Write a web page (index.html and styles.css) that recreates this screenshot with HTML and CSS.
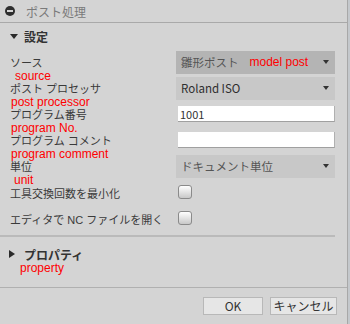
FILE: index.html
```html
<!DOCTYPE html>
<html lang="ja">
<head>
    <meta charset="UTF-8">
    <title>ポスト処理</title>
    <link rel="stylesheet" href="styles.css">
</head>
<body>
    <div class="panel">
        <div class="titlebar">
            <span class="close-icon"></span>
            <span class="title">ポスト処理</span>
        </div>

        <div class="section">
            <div class="section-head"><span class="tri-down"></span>設定</div>

            <div class="row">
                <div class="label">ソース<span class="note note-source">source</span></div>
                <div class="select select-active">
                    <span class="value muted">雛形ポスト</span>
                    <span class="note-inline">model post</span>
                    <span class="arrow"></span>
                </div>
            </div>

            <div class="row">
                <div class="label">ポスト プロセッサ<span class="note">post processor</span></div>
                <div class="select">
                    <span class="value">Roland ISO</span>
                    <span class="arrow"></span>
                </div>
            </div>

            <div class="row">
                <div class="label">プログラム番号<span class="note">program No.</span></div>
                <input class="text-input" type="text" value="1001">
            </div>

            <div class="row">
                <div class="label">プログラム コメント<span class="note">program comment</span></div>
                <input class="text-input" type="text" value="">
            </div>

            <div class="row">
                <div class="label">単位<span class="note note-unit">unit</span></div>
                <div class="select">
                    <span class="value muted">ドキュメント単位</span>
                    <span class="arrow"></span>
                </div>
            </div>

            <div class="row">
                <div class="label">工具交換回数を最小化</div>
                <span class="checkbox"></span>
            </div>

            <div class="row">
                <div class="label">エディタで NC ファイルを開く</div>
                <span class="checkbox"></span>
            </div>
        </div>

        <div class="section section-closed">
            <div class="section-head"><span class="tri-right"></span>プロパティ</div>
            <span class="note note-property">property</span>
        </div>

        <div class="footer">
            <button class="btn btn-ok">OK</button>
            <button class="btn btn-cancel">キャンセル</button>
        </div>
    </div>
</body>
</html>
```

FILE: styles.css
```css
body {
    margin: 0;
    background-color: #c4c8cc;
    font-family: 'Noto Sans CJK JP', 'Noto Sans', sans-serif;
    font-size: 11px;
    color: #3a3a3a;
}

.panel {
    width: 347px;
    height: 324px;
    background-color: #d4d4d4;
    border-right: 1px solid #a8a8a8;
}

.titlebar {
    display: flex;
    align-items: center;
    height: 23px;
    border-bottom: 1px solid #a9a9a9;
    box-sizing: border-box;
}

.close-icon {
    position: relative;
    width: 10px;
    height: 10px;
    margin-left: 5px;
    border-radius: 50%;
    background-color: #2e2e2e;
}

.close-icon::after {
    content: '';
    position: absolute;
    left: 2px;
    top: 4px;
    width: 6px;
    height: 2px;
    background-color: #d4d4d4;
}

.title {
    margin-left: 11px;
    font-size: 12px;
    color: #7a7a7a;
}

.section {
    width: 335px;
    border-bottom: 2px solid #bababa;
    padding-bottom: 4px;
}

.section-head {
    display: flex;
    align-items: center;
    height: 26px;
    padding-left: 10px;
    font-family: 'Liberation Sans', 'Noto Sans CJK JP', sans-serif;
    font-size: 12px;
    font-weight: bold;
    color: #333;
}

.tri-down {
    width: 0;
    height: 0;
    border-left: 4px solid transparent;
    border-right: 4px solid transparent;
    border-top: 5px solid #2a2a2a;
    margin-right: 6px;
}

.tri-right {
    width: 0;
    height: 0;
    border-top: 4px solid transparent;
    border-bottom: 4px solid transparent;
    border-left: 6px solid #2a2a2a;
    margin-right: 9px;
}

.row {
    display: grid;
    grid-template-columns: 176px 159px;
    align-items: center;
    height: 26px;
}

.label {
    padding-top: 3px;
    padding-left: 10px;
    font-family: 'Liberation Sans', 'Noto Sans CJK JP', sans-serif;
    line-height: 12px;
    white-space: nowrap;
}

/* red annotation under a label, mostly kept out of the row height */
.note {
    display: block;
    margin-top: 1px;
    margin-bottom: -11px;
    margin-left: 1px;
    font-family: 'Liberation Sans', Arial, sans-serif;
    font-size: 12px;
    line-height: 12px;
    color: #ff0000;
}

.note-source {
    margin-left: 5px;
}

.note-unit {
    margin-left: 4px;
}

.select {
    display: flex;
    align-items: center;
    height: 23px;
    padding: 0 6px 0 5px;
    background-color: #c8c8c8;
}

.select-active {
    background-color: #b4b4b4;
}

.value {
    font-size: 11.5px;
    color: #2e2e2e;
}

.muted {
    color: #555;
}

.note-inline {
    margin-left: 11px;
    font-family: 'Liberation Sans', Arial, sans-serif;
    font-size: 12px;
    color: #ff0000;
}

.arrow {
    margin-left: auto;
    width: 0;
    height: 0;
    border-left: 3px solid transparent;
    border-right: 3px solid transparent;
    border-top: 4px solid #333;
}

.text-input {
    width: 157px;
    height: 16px;
    margin-left: 2px;
    padding: 0 2px;
    box-sizing: border-box;
    border: none;
    border-bottom: 1px solid #a0a0a0;
    border-right: 1px solid #b0b0b0;
    background-color: #fff;
    font-family: 'Noto Sans CJK JP', sans-serif;
    font-size: 11px;
    color: #333;
}

.checkbox {
    width: 12px;
    height: 12px;
    margin-left: 2px;
    border: 1px solid #8a8a8a;
    border-radius: 3px;
    background: linear-gradient(#ffffff, #c8c8c8);
}

.section-closed {
    width: 347px;
    height: 50px;
    padding-bottom: 0;
    border-bottom: 1px solid #b0b0b0;
}

.section-closed .section-head {
    padding-top: 4px;
    padding-left: 9px;
}

.note-property {
    margin-left: 20px;
    margin-top: -5px;
}

.footer {
    display: flex;
    justify-content: flex-end;
    gap: 7px;
    padding: 9px 10px 0 0;
}

.btn {
    height: 18px;
    padding: 0;
    border: 1px solid #b8b8b8;
    background-color: #e6e6e6;
    font-family: 'Noto Sans CJK JP', sans-serif;
    font-size: 12px;
    color: #333;
    line-height: 16px;
}

.btn-ok {
    width: 60px;
}

.btn-cancel {
    width: 67px;
}
```
